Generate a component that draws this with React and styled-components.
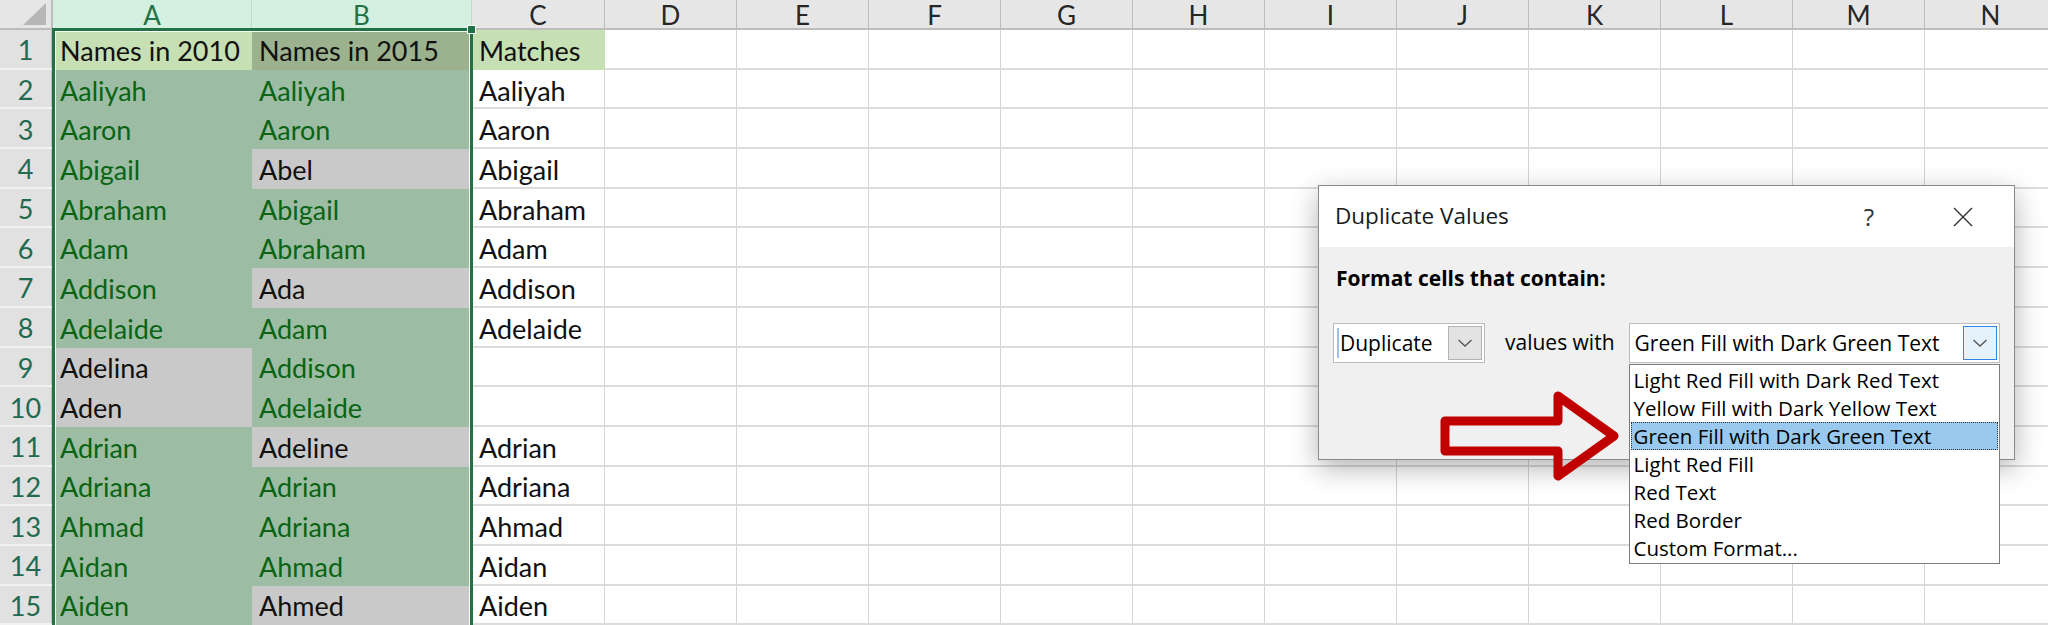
import React from 'react';
import styled, { createGlobalStyle } from 'styled-components';

const GlobalStyle = createGlobalStyle`
  html, body {
    margin: 0;
    padding: 0;
    background: #fff;
  }
`;

const GREEN = '#9cbda3';
const GRAY = '#c9c9c9';
const HEAD = '#c6e0b4';
const HEAD_DARK = '#9cb18e';
const DARK_GREEN_TEXT = '#0b6314';

const columns = [
  { key: 'A', selected: true },
  { key: 'B', selected: true },
  { key: 'C' },
  { key: 'D' },
  { key: 'E' },
  { key: 'F' },
  { key: 'G' },
  { key: 'H' },
  { key: 'I' },
  { key: 'J' },
  { key: 'K' },
  { key: 'L' },
  { key: 'M' },
  { key: 'N' },
];

// g = duplicate (green fill), n = not duplicate (grey under selection)
const rows = [
  [['Names in 2010', 'h'], ['Names in 2015', 'hd'], 'Matches'],
  [['Aaliyah', 'g'], ['Aaliyah', 'g'], 'Aaliyah'],
  [['Aaron', 'g'], ['Aaron', 'g'], 'Aaron'],
  [['Abigail', 'g'], ['Abel', 'n'], 'Abigail'],
  [['Abraham', 'g'], ['Abigail', 'g'], 'Abraham'],
  [['Adam', 'g'], ['Abraham', 'g'], 'Adam'],
  [['Addison', 'g'], ['Ada', 'n'], 'Addison'],
  [['Adelaide', 'g'], ['Adam', 'g'], 'Adelaide'],
  [['Adelina', 'n'], ['Addison', 'g'], ''],
  [['Aden', 'n'], ['Adelaide', 'g'], ''],
  [['Adrian', 'g'], ['Adeline', 'n'], 'Adrian'],
  [['Adriana', 'g'], ['Adrian', 'g'], 'Adriana'],
  [['Ahmad', 'g'], ['Adriana', 'g'], 'Ahmad'],
  [['Aidan', 'g'], ['Ahmad', 'g'], 'Aidan'],
  [['Aiden', 'g'], ['Ahmed', 'n'], 'Aiden'],
];

const styleFor = {
  h: { fill: HEAD, color: '#111' },
  hd: { fill: HEAD_DARK, color: '#111' },
  g: { fill: GREEN, color: DARK_GREEN_TEXT },
  n: { fill: GRAY, color: '#111' },
};

const options = [
  'Light Red Fill with Dark Red Text',
  'Yellow Fill with Dark Yellow Text',
  'Green Fill with Dark Green Text',
  'Light Red Fill',
  'Red Text',
  'Red Border',
  'Custom Format...',
];

const Page = styled.div`
  position: relative;
  width: 2048px;
  height: 625px;
  overflow: hidden;
  background: #fff;
  font-family: Lato, "Liberation Sans", sans-serif;
`;

const Sheet = styled.div`
  display: grid;
  grid-template-columns: 53px 199px 220px 133px repeat(11, 132px);
  grid-template-rows: 30px repeat(15, 39.7px);
`;

const Corner = styled.div`
  box-sizing: border-box;
  background: #e6e6e6;
  border-right: 2px solid #bdbdbd;
  border-bottom: 2px solid #bdbdbd;
  display: flex;
  align-items: flex-end;
  justify-content: flex-end;
  padding: 0 4px 3px 0;
`;

const ColHead = styled.div`
  box-sizing: border-box;
  background: ${(p) => (p.$selected ? '#d3f0e0' : '#e6e6e6')};
  color: ${(p) => (p.$selected ? '#217346' : '#262626')};
  border-right: 1px solid ${(p) => (p.$selected ? '#bfdccb' : '#bdbdbd')};
  border-bottom: 2px solid #bdbdbd;
  display: flex;
  align-items: center;
  justify-content: center;
  font-size: 26px;
  line-height: 1;
  padding-top: 2px;
`;

const RowHead = styled.div`
  box-sizing: border-box;
  background: #e1e1e1;
  color: #1f6b50;
  border-right: 2px solid #bdbdbd;
  border-bottom: 2px solid #f1f1f1;
  display: flex;
  align-items: center;
  justify-content: center;
  font-size: 27px;
  padding-top: 2px;
`;

const Cell = styled.div`
  box-sizing: border-box;
  background: ${(p) => p.$fill || '#fff'};
  color: ${(p) => p.$color || '#111'};
  border-right: 1px solid ${(p) => p.$fill || '#d4d4d4'};
  border-bottom: 2px solid ${(p) => p.$fill || '#dcdcdc'};
  display: flex;
  align-items: center;
  padding: 3px 0 0 7px;
  font-size: 27px;
  white-space: nowrap;
  overflow: hidden;
`;

const Selection = styled.div`
  position: absolute;
  left: 52px;
  top: 28px;
  width: 421px;
  height: 620px;
  box-sizing: border-box;
  border: 3px solid #217346;
  box-shadow: inset 0 0 0 1px rgba(255, 255, 255, 0.85);
  pointer-events: none;
`;

const FillHandle = styled.div`
  position: absolute;
  right: -6px;
  top: -6px;
  width: 7px;
  height: 7px;
  background: #217346;
  border: 1px solid #fff;
`;

const Dialog = styled.div`
  position: absolute;
  left: 1318px;
  top: 185px;
  width: 697px;
  height: 275px;
  box-sizing: border-box;
  border: 1px solid #8a8a8a;
  background: #f0f0f0;
  box-shadow: 0 8px 26px rgba(0, 0, 0, 0.3);
  font-family: "Open Sans", "Noto Sans", sans-serif;
  color: #000;
`;

const TitleBar = styled.div`
  height: 61px;
  background: #fff;
  display: flex;
  align-items: center;
  padding-left: 16px;
`;

const Title = styled.div`
  font-size: 22.5px;
  color: #1a1a1a;
  flex: 1;
  padding-bottom: 2px;
`;

const TitleButton = styled.div`
  width: ${(p) => p.$w}px;
  height: 61px;
  display: flex;
  align-items: center;
  justify-content: center;
  font-size: 24px;
  color: #333;
  margin-right: ${(p) => p.$mr || 0}px;
`;

const Body = styled.div`
  padding: 18px 0 0 14px;
`;

const Heading = styled.div`
  font-weight: 700;
  font-size: 21px;
  line-height: 26px;
  padding-left: 3px;
`;

const ControlRow = styled.div`
  display: flex;
  align-items: center;
  margin-top: 32px;
`;

const Combo = styled.div`
  position: relative;
  box-sizing: border-box;
  width: ${(p) => p.$w}px;
  height: 40px;
  border: 1px solid #bcbcbc;
  background: #fff;
  display: flex;
  align-items: center;
  font-size: 21px;
`;

const Caret = styled.span`
  width: 2px;
  height: 30px;
  background: #9cc2ec;
  margin-left: 3px;
`;

const ComboText = styled.span`
  padding-left: ${(p) => p.$pl}px;
  flex: 1;
  white-space: nowrap;
`;

const ComboButton = styled.div`
  box-sizing: border-box;
  width: 34px;
  height: 34px;
  margin-right: 2px;
  background: ${(p) => (p.$active ? '#e5f1fb' : '#e3e3e3')};
  border: 1px solid ${(p) => (p.$active ? '#2f86dc' : '#b3b3b3')};
  display: flex;
  align-items: center;
  justify-content: center;
`;

const Label = styled.span`
  font-size: 21px;
  margin: 0 14px 0 20px;
  padding-bottom: 2px;
`;

const DropList = styled.div`
  position: absolute;
  left: -1px;
  top: 40px;
  width: 371px;
  box-sizing: border-box;
  border: 1px solid #7d7d7d;
  background: #fff;
  padding: 1px 1px;
  z-index: 2;
`;

const Option = styled.div`
  height: 28px;
  line-height: 28px;
  padding-left: 3px;
  font-size: 20.5px;
  white-space: nowrap;
  background: ${(p) => (p.$active ? '#99c9ef' : 'transparent')};
  outline: ${(p) => (p.$active ? '1px dotted #333' : 'none')};
  outline-offset: -1px;
`;

const Arrow = styled.svg`
  position: absolute;
  left: 1434px;
  top: 386px;
  z-index: 3;
`;

const Chevron = () => (
  <svg width="16" height="10" viewBox="0 0 16 10">
    <polyline points="1.5,2 8,8 14.5,2" fill="none" stroke="#555" strokeWidth="1.3" />
  </svg>
);

const CornerTriangle = () => (
  <svg width="24" height="22" viewBox="0 0 24 22">
    <polygon points="23,0 23,22 0,22" fill="#b6b6b6" />
  </svg>
);

export default function App() {
  return (
    <Page>
      <GlobalStyle />
      <Sheet>
        <Corner>
          <CornerTriangle />
        </Corner>
        {columns.map((c) => (
          <ColHead key={c.key} $selected={c.selected}>
            {c.key}
          </ColHead>
        ))}
        {rows.map((row, i) => (
          <React.Fragment key={i}>
            <RowHead>{i + 1}</RowHead>
            {row.map((cell, j) => {
              if (Array.isArray(cell)) {
                const s = styleFor[cell[1]];
                return (
                  <Cell key={j} $fill={s.fill} $color={s.color}>
                    {cell[0]}
                  </Cell>
                );
              }
              const s = i === 0 ? styleFor.h : {};
              return (
                <Cell key={j} $fill={s.fill} $color={s.color}>
                  {cell}
                </Cell>
              );
            })}
            {columns.slice(3).map((c) => (
              <Cell key={c.key} />
            ))}
          </React.Fragment>
        ))}
      </Sheet>

      <Selection>
        <FillHandle />
      </Selection>

      <Dialog>
        <TitleBar>
          <Title>Duplicate Values</Title>
          <TitleButton $w={60} $mr={28}>?</TitleButton>
          <TitleButton $w={72} $mr={15}>
            <svg width="22" height="22" viewBox="0 0 22 22">
              <path d="M2 2 L20 20 M20 2 L2 20" stroke="#333" strokeWidth="1.4" />
            </svg>
          </TitleButton>
        </TitleBar>
        <Body>
          <Heading>Format cells that contain:</Heading>
          <ControlRow>
            <Combo $w={152}>
              <Caret />
              <ComboText $pl={1}>Duplicate</ComboText>
              <ComboButton>
                <Chevron />
              </ComboButton>
            </Combo>
            <Label>values with</Label>
            <Combo $w={371}>
              <ComboText $pl={5}>Green Fill with Dark Green Text</ComboText>
              <ComboButton $active>
                <Chevron />
              </ComboButton>
              <DropList>
                {options.map((o, i) => (
                  <Option key={o} $active={i === 2}>
                    {o}
                  </Option>
                ))}
              </DropList>
            </Combo>
          </ControlRow>
        </Body>
      </Dialog>

      <Arrow width="192" height="100" viewBox="0 0 192 100">
        <path
          d="M11 35 L124 35 L124 10 L180 50 L124 90 L124 65 L11 65 Z"
          fill="none"
          stroke="#c00000"
          strokeWidth="9"
          strokeLinejoin="round"
        />
      </Arrow>
    </Page>
  );
}
